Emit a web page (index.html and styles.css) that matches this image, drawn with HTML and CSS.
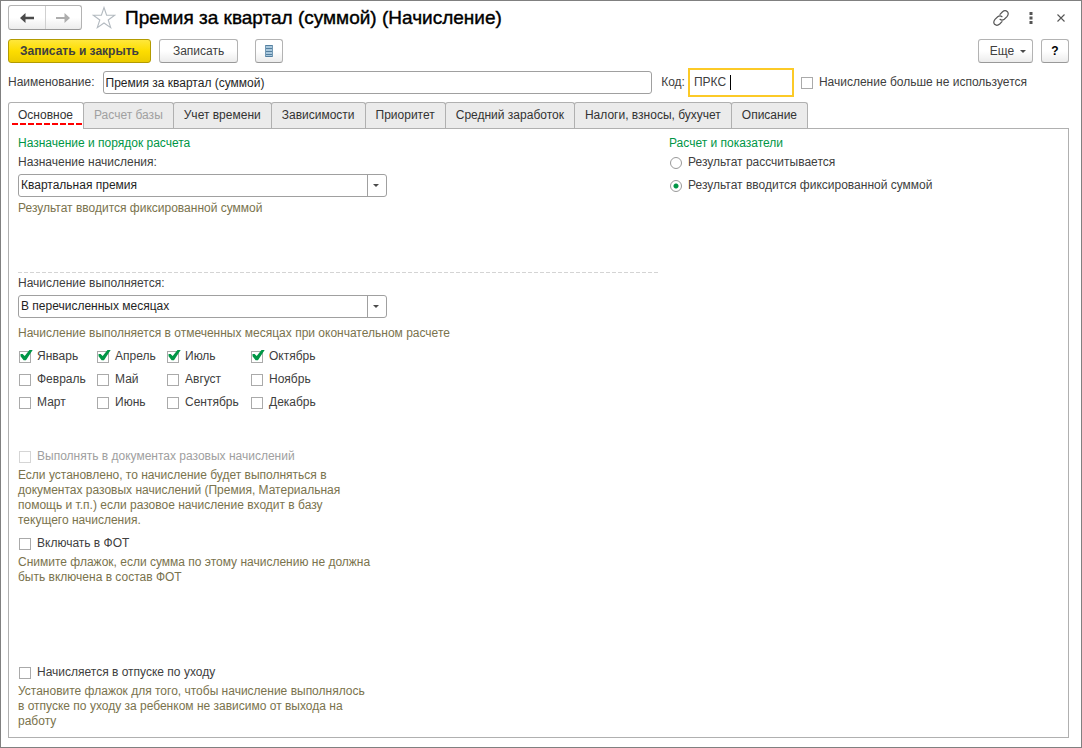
FILE: index.html
```html
<!DOCTYPE html>
<html lang="ru">
<head>
<meta charset="utf-8">
<meta name="viewport" content="width=device-width, initial-scale=1">
<title>Премия за квартал (суммой) (Начисление)</title>
<link rel="stylesheet" href="styles.css">
</head>
<body>
<div class="window">
  <header class="titlebar">
    <div class="history">
      <button type="button" class="history-btn" aria-label="Назад">
        <svg width="16" height="12" viewBox="0 0 16 12"><path d="M1 6L6.500 1V4.800H15V7.200H6.500V11Z" fill="#4a4a4a"/></svg>
      </button>
      <button type="button" class="history-btn" aria-label="Вперед">
        <svg width="16" height="12" viewBox="0 0 16 12"><path d="M15 6L9.500 1V4.900H1V7.100H9.500V11Z" fill="#adadad"/></svg>
      </button>
    </div>
    <button type="button" class="icon-btn star" aria-label="В избранное">
      <svg width="24" height="24" viewBox="0 0 24 24"><path d="M12 1.500L14.600 9.200H22.700L16.200 14L18.700 21.700L12 17L5.300 21.700L7.800 14L1.300 9.200H9.400Z" fill="#fff" stroke="#b3bac0" stroke-width="1.100"/></svg>
    </button>
    <h1 class="title">Премия за квартал (суммой) (Начисление)</h1>
    <div class="window-tools">
      <button type="button" class="icon-btn" aria-label="Получить ссылку">
        <svg width="16" height="16" viewBox="0 0 16 16" fill="none" stroke="#555" stroke-width="1.200" stroke-linecap="round"><path d="M7 4.300L9.300 2Q12 -.400 14.400 1.700Q16.200 4 14 6.700L11.300 9.200Q9 10.900 7 9.300"/><path d="M9 11.700L6.700 14Q4 16.400 1.600 14.300Q-.200 12 2 9.300L4.700 6.800Q7 5.100 9 6.700"/></svg>
      </button>
      <button type="button" class="icon-btn" aria-label="Меню окна">
        <svg width="4" height="12" viewBox="0 0 4 12" fill="#555"><path d="M.500 0h3v3h-3zM.500 4.500h3v3h-3zM.500 9h3v3h-3z"/></svg>
      </button>
      <button type="button" class="icon-btn close" aria-label="Закрыть">
        <svg width="8" height="8" viewBox="0 0 8 8" stroke="#555" stroke-width="1.100"><path d="M.500 .500L7.500 7.500M7.500 .500L.500 7.500"/></svg>
      </button>
    </div>
  </header>

  <div class="commands">
    <button type="button" class="btn btn-primary">Записать и закрыть</button>
    <button type="button" class="btn">Записать</button>
    <button type="button" class="btn btn-list" aria-label="Список">
      <svg width="8" height="12" viewBox="0 0 8 12"><path fill="#a9c8dd" d="M0 0h8v12H0z"/><path d="M0 .500H8M0 3.500H8M0 6.500H8M0 9.500H8M0 11.500H8" stroke="#547f9f"/><path d="M.500 0V12M7.500 0V12" stroke="#7399b4"/></svg>
    </button>
    <div class="commands-end">
      <button type="button" class="btn btn-more">Еще <svg width="6" height="3" viewBox="0 0 6 3"><path d="M0 0H6L3 3Z" fill="#4a4a4a"/></svg></button>
      <button type="button" class="btn btn-help">?</button>
    </div>
  </div>

  <div class="identity">
    <label for="name">Наименование:</label>
    <input class="field name-field" id="name" type="text" value="Премия за квартал (суммой)">
    <label class="code-label" for="code">Код:</label>
    <span class="code-box"><input class="code-field" id="code" type="text" value="ПРКС "></span>
    <label class="option"><input type="checkbox">Начисление больше не используется</label>
  </div>

  <nav class="tabs" role="tablist">
    <button type="button" class="tab tab-active" role="tab" aria-selected="true">Основное</button>
    <button type="button" class="tab" role="tab" disabled>Расчет базы</button>
    <button type="button" class="tab" role="tab">Учет времени</button>
    <button type="button" class="tab" role="tab">Зависимости</button>
    <button type="button" class="tab" role="tab">Приоритет</button>
    <button type="button" class="tab" role="tab">Средний заработок</button>
    <button type="button" class="tab" role="tab">Налоги, взносы, бухучет</button>
    <button type="button" class="tab" role="tab">Описание</button>
  </nav>

  <main class="panel">
    <div class="column">
      <section class="purpose">
        <h2 class="heading">Назначение и порядок расчета</h2>
        <label class="caption" for="purpose">Назначение начисления:</label>
        <span class="combo"><select class="field" id="purpose"><option>Квартальная премия</option></select></span>
        <p class="hint">Результат вводится фиксированной суммой</p>
      </section>

      <hr class="divider">

      <section class="schedule">
        <label class="caption" for="schedule">Начисление выполняется:</label>
        <span class="combo"><select class="field" id="schedule"><option>В перечисленных месяцах</option></select></span>
        <p class="hint schedule-hint">Начисление выполняется в отмеченных месяцах при окончательном расчете</p>
        <div class="months">
          <label class="option"><input type="checkbox" checked>Январь</label>
          <label class="option"><input type="checkbox" checked>Апрель</label>
          <label class="option"><input type="checkbox" checked>Июль</label>
          <label class="option"><input type="checkbox" checked>Октябрь</label>
          <label class="option"><input type="checkbox">Февраль</label>
          <label class="option"><input type="checkbox">Май</label>
          <label class="option"><input type="checkbox">Август</label>
          <label class="option"><input type="checkbox">Ноябрь</label>
          <label class="option"><input type="checkbox">Март</label>
          <label class="option"><input type="checkbox">Июнь</label>
          <label class="option"><input type="checkbox">Сентябрь</label>
          <label class="option"><input type="checkbox">Декабрь</label>
        </div>
      </section>

      <section class="flags">
        <div class="flag">
          <label class="option option-disabled"><input type="checkbox" disabled>Выполнять в документах разовых начислений</label>
          <p class="hint">Если установлено, то начисление будет выполняться в документах разовых начислений (Премия, Материальная помощь и т.п.) если разовое начисление входит в базу текущего начисления.</p>
        </div>
        <div class="flag">
          <label class="option"><input type="checkbox">Включать в ФОТ</label>
          <p class="hint">Снимите флажок, если сумма по этому начислению не должна быть включена в состав ФОТ</p>
        </div>
      </section>

      <section class="flag leave">
        <label class="option"><input type="checkbox">Начисляется в отпуске по уходу</label>
        <p class="hint">Установите флажок для того, чтобы начисление выполнялось в отпуске по уходу за ребенком не зависимо от выхода на работу</p>
      </section>
    </div>

    <div class="column results">
      <h2 class="heading">Расчет и показатели</h2>
      <label class="option"><input type="radio" name="result">Результат рассчитывается</label>
      <label class="option"><input type="radio" name="result" checked>Результат вводится фиксированной суммой</label>
    </div>
  </main>
</div>
</body>
</html>
```

FILE: styles.css
```css
* {
  box-sizing: border-box;
}

body {
  margin: 0;
  background: #fff;
  color: #404040;
  font: 12px/15px "Liberation Sans", Arial, sans-serif;
}

button,
input,
select {
  margin: 0;
  color: inherit;
  font: inherit;
}

h1,
h2,
p {
  margin: 0;
}

svg {
  display: block;
  flex: none;
}

.window {
  display: flex;
  flex-direction: column;
  min-height: 100vh;
  padding: 4px 12px 9px 7px;
  border: 1px solid #808080;
}

/* Title bar */

.titlebar {
  display: flex;
  align-items: center;
  height: 25px;
}

.history {
  display: flex;
  width: 74px;
  height: 25px;
  border: 1px solid #b3b3b3;
  border-bottom-color: #999;
  border-radius: 3px;
  background: linear-gradient(#fff 50%, #ececec);
}

.history-btn {
  display: flex;
  flex: 1;
  align-items: center;
  justify-content: center;
  padding: 0;
  border: 0;
  background: none;
}

.history-btn + .history-btn {
  border-left: 1px solid #d0d0d0;
}

.icon-btn {
  padding: 0;
  border: 0;
  background: none;
}

.star {
  margin: 0 9px 0 10px;
}

.title {
  color: #000;
  font-size: 19px;
  font-weight: 400;
  line-height: 24px;
  -webkit-text-stroke: 0.4px #000;
}

.window-tools {
  display: flex;
  align-items: center;
  gap: 20px;
  margin-left: auto;
  padding-right: 4px;
}

.close {
  margin-left: 4px;
}

/* Command bar */

.commands {
  display: flex;
  gap: 8px;
  margin-top: 9px;
}

.commands-end {
  display: flex;
  gap: 8px;
  margin-left: auto;
}

.btn {
  display: flex;
  align-items: center;
  justify-content: center;
  height: 24px;
  padding: 0 13px;
  border: 1px solid #b3b3b3;
  border-bottom-color: #999;
  border-radius: 3px;
  background: linear-gradient(#fff 50%, #ececec);
}

.btn-primary {
  padding: 0 11px;
  border-color: #b39b00;
  background: linear-gradient(#ffe73b, #fddd00 50%, #ebcb00);
  font-weight: 700;
}

.btn-list {
  width: 28px;
  margin-left: 9px;
  padding: 0;
}

.btn-more {
  gap: 6px;
  width: 55px;
  padding: 0 6px 0 11px;
}

.btn-help {
  width: 28px;
  padding: 0;
  color: #000;
  font-weight: 700;
}

/* Name and code */

.identity {
  display: flex;
  align-items: center;
  height: 29px;
  margin-top: 5px;
}

.field {
  height: 23px;
  padding: 0 2px;
  border: 1px solid #a0a0a0;
  border-radius: 3px;
  outline: 0;
  background: #fff;
  color: #1f1f1f;
}

.name-field {
  flex: 1;
  min-width: 0;
  margin-left: 8px;
}

.code-label {
  margin: 0 3px 0 9px;
}

.code-box {
  position: relative;
  display: flex;
  width: 106px;
  height: 29px;
  margin-right: 7px;
  border: 2px solid #fcca27;
}

.code-box::after {
  content: "";
  position: absolute;
  top: 5px;
  left: 40px;
  width: 1px;
  height: 15px;
  background: #000;
}

.code-field {
  width: 100%;
  padding: 0 4px;
  border: 0;
  outline: 0;
  background: none;
}

.identity .option {
  margin-right: 42px;
}

/* Tick boxes and radio buttons */

.option {
  display: flex;
  align-items: center;
  gap: 6px;
  line-height: 15px;
  white-space: nowrap;
}

.option input {
  position: relative;
  flex: none;
  width: 12px;
  height: 12px;
  appearance: none;
  border: 1px solid #aaa;
  background: #fff;
}

.option input[type="radio"] {
  border-color: #999;
  border-radius: 50%;
}

.option input[type="radio"]:checked {
  background: radial-gradient(circle, #009646 2px, #fff 3px);
}

.option input[type="checkbox"]:checked::after {
  content: "";
  position: absolute;
  top: -2px;
  left: 0;
  width: 13px;
  height: 11px;
  background: #009646;
  clip-path: polygon(4% 42%, 20% 42%, 36% 60%, 76% 0, 100% 0, 46% 98%, 28% 98%, 4% 62%);
}

.option-disabled {
  color: #a0a0a0;
}

.option-disabled input {
  border-color: #d5d5d5;
}

/* Tabs */

.tabs {
  display: flex;
  margin-top: 5px;
}

.tab {
  height: 26px;
  margin-left: -1px;
  padding: 0 10px 1px;
  border: 1px solid #b0b0b0;
  border-bottom: 0;
  border-radius: 3px 3px 0 0;
  background: #ebebeb;
  color: #333;
  white-space: nowrap;
}

.tab:disabled {
  color: #a0a0a0;
}

.tab-active {
  position: relative;
  height: 27px;
  margin: 0 0 -1px;
  padding: 0 10px 2px 9px;
  background: #fff;
}

.tab-active::after {
  content: "";
  position: absolute;
  right: 1px;
  bottom: 4px;
  left: 3px;
  height: 2px;
  background: repeating-linear-gradient(90deg, #f00 0 6px, #fff 6px 8px);
}

/* Main page of the form */

.panel {
  display: grid;
  flex: 1;
  grid-template-columns: 640fr 391fr;
  gap: 11px;
  padding: 7px 8px 8px 9px;
  border: 1px solid #b0b0b0;
}

.column {
  display: flex;
  flex-direction: column;
  min-width: 0;
}

.heading {
  color: #009646;
  font-size: 12px;
  font-weight: 400;
  line-height: 15px;
}

.caption {
  display: block;
}

.purpose .caption {
  margin-top: 4px;
}

.combo {
  position: relative;
  display: block;
  width: 369px;
  max-width: 100%;
  margin-top: 4px;
}

.combo select {
  display: block;
  width: 100%;
  appearance: none;
}

.combo::before {
  content: "";
  position: absolute;
  top: 1px;
  right: 19px;
  bottom: 1px;
  width: 1px;
  background: #a0a0a0;
}

.combo::after {
  content: "";
  position: absolute;
  top: 10px;
  right: 8px;
  width: 6px;
  height: 3px;
  background: #4a4a4a;
  clip-path: polygon(0 0, 100% 0, 50% 100%);
}

.hint {
  max-width: 355px;
  margin-top: 4px;
  color: #7a734d;
}

.divider {
  width: 100%;
  height: 1px;
  margin: 56px 0 3px;
  border: 0;
  background: repeating-linear-gradient(90deg, #d4d4d4 0 4px, #fff 4px 6px);
}

.schedule-hint {
  max-width: none;
  margin-top: 8px;
}

.months {
  display: grid;
  grid-template-columns: 78px 70px 84px auto;
  row-gap: 8px;
  margin-top: 8px;
  padding-left: 1px;
}

.flags {
  display: grid;
  gap: 8px;
  margin-top: 39px;
}

.flag .option {
  padding-left: 1px;
}

.leave {
  margin-top: 80px;
}

.results .option {
  margin-top: 4px;
  padding-left: 1px;
}

.results .option + .option {
  margin-top: 8px;
}
```
